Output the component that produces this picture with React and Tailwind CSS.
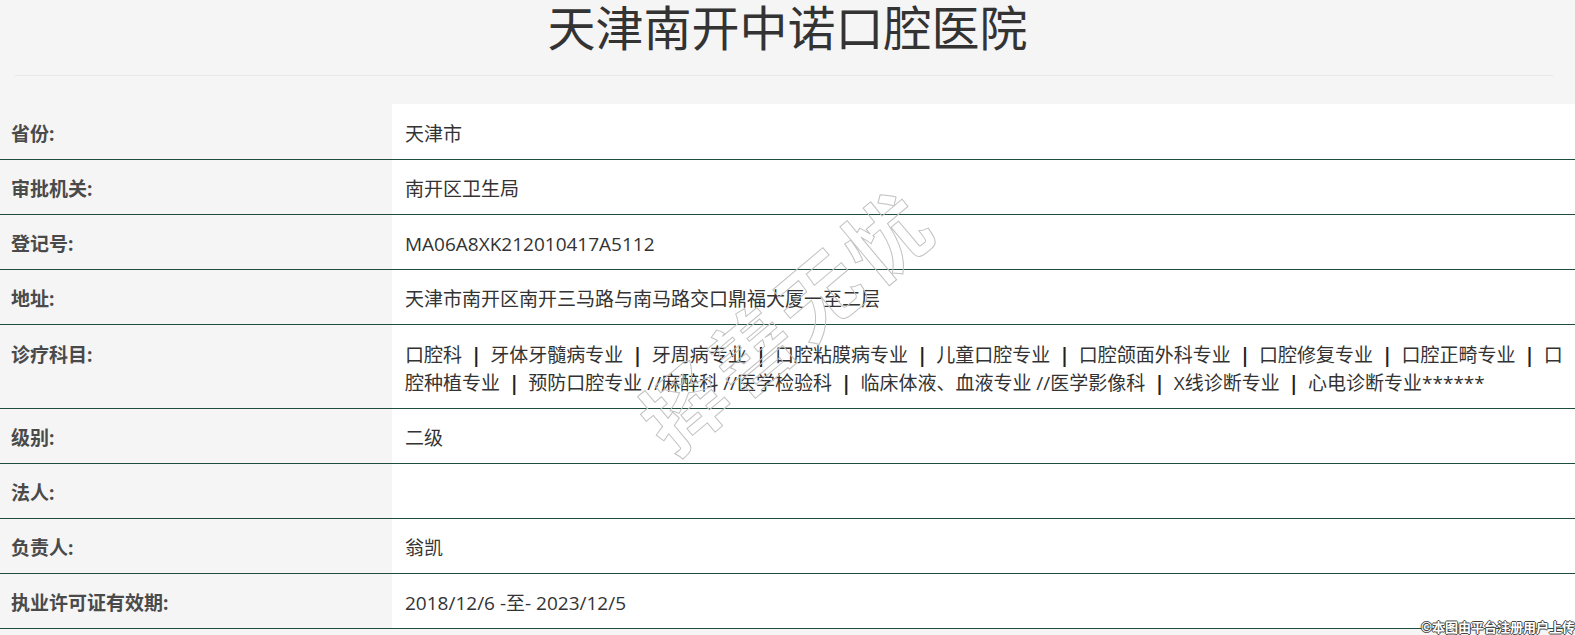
import React from "react";

const S = () => <span className="font-bold text-[#222] mx-[4px]">|</span>;

const rows = [
  { label: "省份:", value: "天津市", extra: true },
  { label: "审批机关:", value: "南开区卫生局" },
  { label: "登记号:", value: "MA06A8XK212010417A5112" },
  { label: "地址:", value: "天津市南开区南开三马路与南马路交口鼎福大厦一至二层" },
  {
    label: "诊疗科目:",
    extra: true,
    value: (
      <>
        口腔科 <S /> 牙体牙髓病专业 <S /> 牙周病专业 <S /> 口腔粘膜病专业 <S /> 儿童口腔专业 <S /> 口腔颌面外科专业 <S /> 口腔修复专业 <S /> 口腔正畸专业 <S /> 口
        <br />
        腔种植专业 <S /> 预防口腔专业 //麻醉科 //医学检验科 <S /> 临床体液、血液专业 //医学影像科 <S /> X线诊断专业 <S /> 心电诊断专业******
      </>
    ),
  },
  { label: "级别:", value: "二级" },
  { label: "法人:", value: "" },
  { label: "负责人:", value: "翁凯" },
  { label: "执业许可证有效期:", value: "2018/12/6 -至- 2023/12/5" },
];

export default function App() {
  return (
    <div
      className="relative w-[1575px] h-[635px] overflow-hidden bg-[#f5f5f5] text-[#333]"
      style={{ fontFamily: '"Open Sans","Noto Sans CJK SC",sans-serif' }}
    >
      <h1 className="text-center text-[48px] leading-[56px] font-normal text-[#333]">
        天津南开中诺口腔医院
      </h1>
      <div className="ml-[15px] mr-[22px] mt-[19px] border-t border-[#e8e8e8]" />
      <div className="mt-[28px]">
        {rows.map((r, i) => (
          <div key={i} className="flex border-b border-[#1f4e3d]">
            <div
              className={
                r.extra
                  ? "w-[392px] shrink-0 pl-[11px] pt-[16px] pb-[11px] text-[19px] leading-[28px] font-bold text-[#4a4a4a]"
                  : "w-[392px] shrink-0 pl-[11px] pt-[15px] pb-[11px] text-[19px] leading-[28px] font-bold text-[#4a4a4a]"
              }
            >
              {r.label}
            </div>
            <div
              className={
                r.extra
                  ? "flex-1 bg-white pl-[13px] pr-[10px] pt-[16px] pb-[11px] text-[19px] leading-[28px] text-[#333] whitespace-nowrap"
                  : "flex-1 bg-white pl-[13px] pr-[10px] pt-[15px] pb-[11px] text-[19px] leading-[28px] text-[#333] whitespace-nowrap"
              }
            >
              {r.value}
            </div>
          </div>
        ))}
      </div>

      <div className="pointer-events-none absolute left-[785px] top-[318px] -translate-x-1/2 -translate-y-1/2 rotate-[-40deg]">
        <span
          className="block whitespace-nowrap text-[82px] leading-none font-bold text-transparent tracking-[6px] [-webkit-text-stroke:1px_#c2c2c2]"
          style={{ fontFamily: '"Noto Sans CJK SC",sans-serif' }}
        >
          择善无忧
        </span>
      </div>

      <div
        className="absolute right-0 bottom-[1px] text-[13px] leading-[15px] font-bold text-white [text-shadow:1px_0_#444,-1px_0_#444,0_1px_#444,0_-1px_#444]"
        style={{ fontFamily: '"Noto Sans CJK SC",sans-serif' }}
      >
        ©本图由平台注册用户上传
      </div>
    </div>
  );
}
